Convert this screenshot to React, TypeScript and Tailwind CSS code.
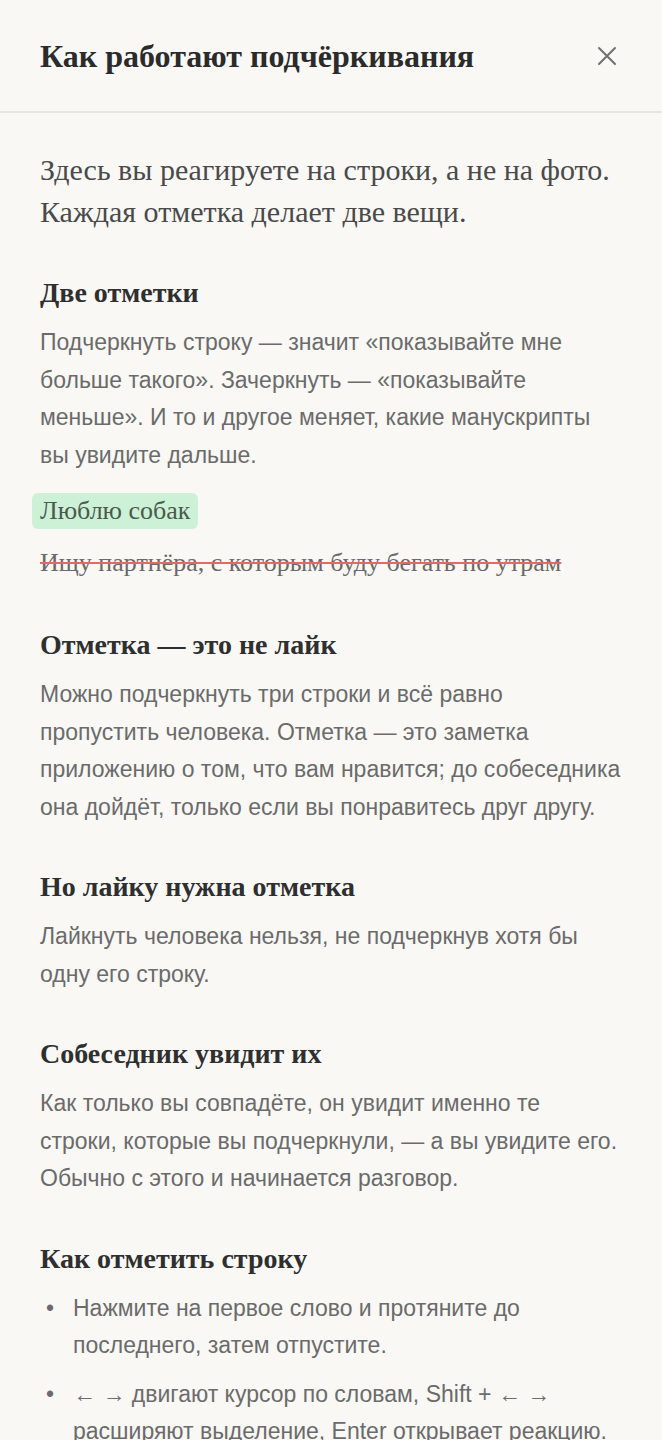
const serif = 'font-["Liberation_Serif",serif]';

function H({ children }: { children: React.ReactNode }) {
  return (
    <h2 className='font-["Liberation_Serif",serif] text-[28px] leading-[36px] font-bold text-[#2f2f2f] mb-[13px]'>
      {children}
    </h2>
  );
}

function P({ children }: { children: React.ReactNode }) {
  return (
    <p className='font-["Liberation_Sans",sans-serif] text-[23px] leading-[37.5px] text-[#6b6b6b]'>{children}</p>
  );
}

export default function App() {
  return (
    <div className="min-h-screen bg-[#f9f8f5]">
      <header className="h-[113px] flex items-center justify-between px-[40px] border-b-2 border-[#e8e6e1]">
        <h1 className='font-["Liberation_Serif",serif] text-[32px] font-bold text-[#2b2b2b]'>Как работают подчёркивания</h1>
        <button className="w-[24px] h-[24px] flex items-center justify-center text-[#6f6f6f] mr-[3px]">
          <svg width="20" height="20" viewBox="0 0 20 20" fill="none" stroke="currentColor" strokeWidth="2" strokeLinecap="round">
            <path d="M2 2L18 18M18 2L2 18" />
          </svg>
        </button>
      </header>
      <main className="px-[40px] pt-[36px] pb-[40px]">
        <p className={`${serif} text-[30px] leading-[42px] text-[#4a4a4a]`}>
          Здесь вы реагируете на строки, а не на фото. Каждая отметка делает две вещи.
        </p>

        <section className="mt-[42px]">
          <H>Две отметки</H>
          <P>
            Подчеркнуть строку — значит «показывайте мне больше такого». Зачеркнуть — «показывайте меньше». И то и другое меняет, какие манускрипты вы увидите дальше.
          </P>
          <div className="mt-[19px]">
            <span className='inline-block font-["Liberation_Serif",serif] text-[26px] leading-[36px] text-[#4a5a4c] bg-[#cdf1d6] rounded-[6px] px-[8px] -ml-[8px]'>
              Люблю собак
            </span>
          </div>
          <div className="mt-[16px] leading-[36px]">
            <span className='font-["Liberation_Serif",serif] text-[26px] leading-[36px] text-[#6a6a6a] line-through decoration-[#e46a6a] decoration-2'>
              Ищу партнёра, с которым буду бегать по утрам
            </span>
          </div>
        </section>

        <section className="mt-[44px]">
          <H>Отметка — это не лайк</H>
          <P>
            Можно подчеркнуть три строки и всё равно пропустить человека. Отметка — это заметка приложению о том, что вам нравится; до собеседника она дойдёт, только если вы понравитесь друг другу.
          </P>
        </section>

        <section className="mt-[43px]">
          <H>Но лайку нужна отметка</H>
          <P>Лайкнуть человека нельзя, не подчеркнув хотя бы одну его строку.</P>
        </section>

        <section className="mt-[43px]">
          <H>Собеседник увидит их</H>
          <P>
            Как только вы совпадёте, он увидит именно те строки, которые вы подчеркнули, — а вы увидите его. Обычно с этого и начинается разговор.
          </P>
        </section>

        <section className="mt-[43px]">
          <H>Как отметить строку</H>
          <ul className="flex flex-col gap-[11px]">
            <li className="flex">
              <span className='w-[33px] shrink-0 pl-[6px] font-["Liberation_Sans",sans-serif] text-[23px] leading-[37.5px] text-[#6b6b6b]'>•</span>
              <P>Нажмите на первое слово и протяните до последнего, затем отпустите.</P>
            </li>
            <li className="flex">
              <span className='w-[33px] shrink-0 pl-[6px] font-["Liberation_Sans",sans-serif] text-[23px] leading-[37.5px] text-[#6b6b6b]'>•</span>
              <P>← → двигают курсор по словам, Shift + ← → расширяют выделение, Enter открывает реакцию.</P>
            </li>
          </ul>
        </section>
      </main>
    </div>
  );
}
